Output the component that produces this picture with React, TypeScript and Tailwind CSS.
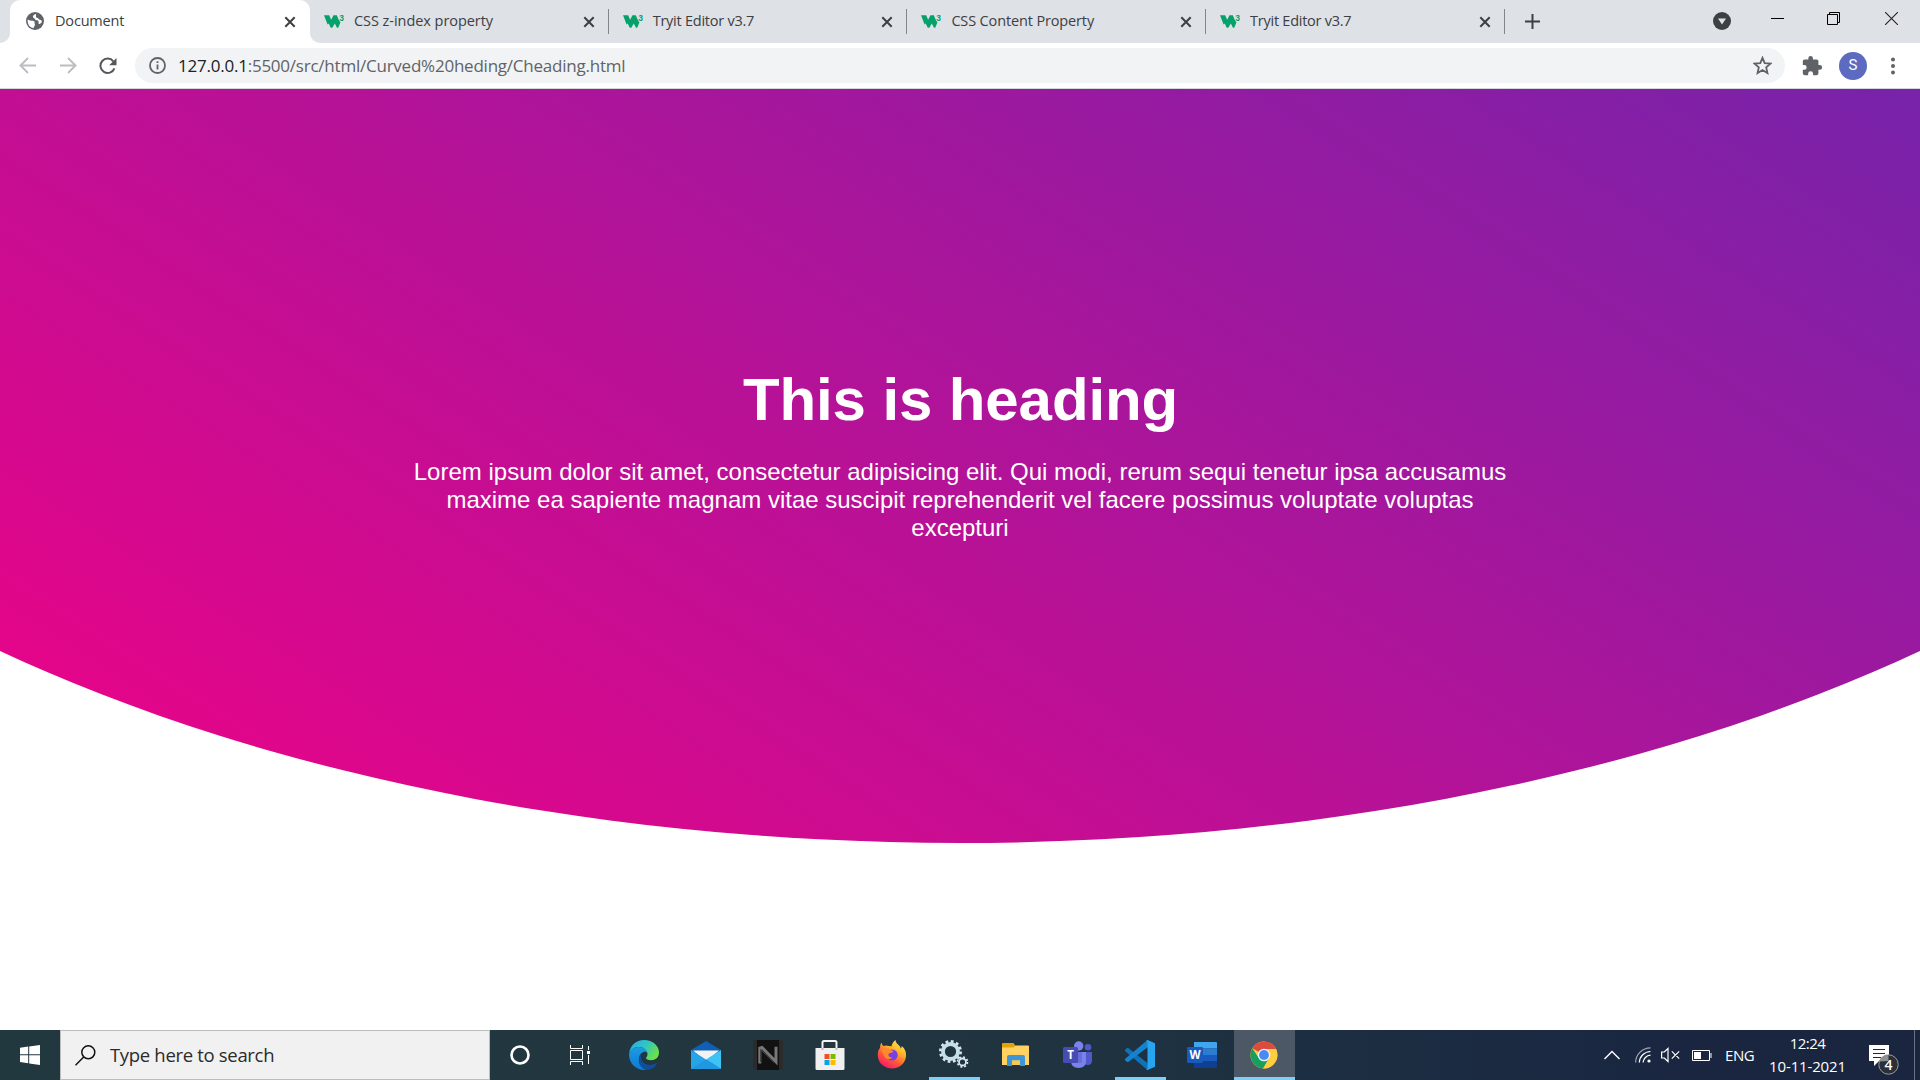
import type { ReactNode } from "react";

const ui = "font-['Open_Sans','Noto_Sans',sans-serif]";

function GlobeIcon() {
  return (
    <svg width="18" height="18" viewBox="0 0 18 18">
      <circle cx="9" cy="9" r="9" fill="#5f6368" />
      <path d="M1.6 7.6c2.2 1 3.4 1.300 5 1.100 1.300-.1 2.200.6 2 1.900-.2 1 .5 1.500.300 2.500-.2 1.200-1 2-1.500 3.200C3.800 15.600 1.400 12.500 1.600 7.600z" fill="#fff" />
      <path d="M9.600 2.100c-1.600.6-2.800 1.500-2.600 2.900.2 1.100 1.500 1 1.900 1.900.4 1 .9 1.600 2.100 1.400 1.400-.2 1.800 1.100 1.500 2.300-.2 1 .3 1.500 1.200 1.300 1-.3 1.900-1.100 2.200-2.400-.3-1-.8-1.600-1.900-1.700-1.500-.1-1.100-1.500-2.300-1.900-1-.3-1.900-.5-1.700-1.700.1-.8.400-1.300-.4-2.100z" fill="#fff" />
    </svg>
  );
}

function SchoolIcon() {
  return (
    <svg width="20" height="18" viewBox="0 0 20 18">
      <path d="M0 3.200H5.200L7.100 7.800 9.500 3.200H12.800L14.600 7.400 16.400 10.500 14.200 15.800 13 15.800 10.800 11.500 8.300 15.800H6.800L4.700 11.400 3.600 12.600z" fill="#04a16b" />
      <text x="15.300" y="8.500" fontSize="8.500" fontWeight="700" fontFamily="Liberation Sans, sans-serif" fill="#04a16b">3</text>
    </svg>
  );
}

function CloseIcon() {
  return (
    <svg width="12" height="12" viewBox="0 0 12 12" stroke="#3c4043" strokeWidth="2">
      <path d="M1.300 1.300l9.400 9.400M10.700 1.300L1.300 10.700" />
    </svg>
  );
}

function Tab({ title, tracking }: { title: string; tracking: string }) {
  return (
    <div className="flex h-[43px] w-[298.7px] shrink-0 items-center pb-[1px] pl-[14px]">
      <SchoolIcon />
      <span className={`ml-[10px] whitespace-nowrap text-[14.500px] leading-5 text-[#3c4043] ${tracking}`}>{title}</span>
      <span className="ml-auto mr-[13px] pt-[2px]"><CloseIcon /></span>
      <span className="mt-[1px] h-[25px] w-px bg-[#80868b]" />
    </div>
  );
}

function Chrome() {
  return (
    <header className={`flex h-[89px] w-full flex-col bg-white ${ui}`}>
      <div className="flex h-[43px] bg-[#dee1e6]">
        <div className="flex h-full w-[10px] bg-white">
          <div className="h-full w-full rounded-br-[10px] bg-[#dee1e6]" />
        </div>
        <div className="flex h-full w-[300px] shrink-0 items-center bg-[#dee1e6]">
          <div className="flex h-full w-full items-center rounded-t-[10px] bg-white pb-[1px] pl-4">
            <GlobeIcon />
            <span className="ml-[11px] text-[14.500px] leading-5 tracking-[-0.180px] text-[#3c4043]">Document</span>
            <span className="ml-auto mr-[14px] pt-[2px]"><CloseIcon /></span>
          </div>
        </div>
        <div className="flex flex-1 bg-white">
          <div className="flex flex-1 rounded-bl-[10px] bg-[#dee1e6]">
            <Tab title="CSS z-index property" tracking="tracking-[-0.050px]" />
            <Tab title="Tryit Editor v3.7" tracking="tracking-[-0.250px]" />
            <Tab title="CSS Content Property" tracking="tracking-[-0.140px]" />
            <Tab title="Tryit Editor v3.7" tracking="tracking-[-0.250px]" />
            <svg className="mt-[14px] ml-[20px]" width="15" height="15" viewBox="0 0 15 15" stroke="#3c4043" strokeWidth="2">
              <path d="M7.500 0v15M0 7.500h15" />
            </svg>
            <svg className="mt-[12px] ml-auto mr-[40px]" width="18" height="18" viewBox="0 0 18 18">
              <circle cx="9" cy="9" r="9" fill="#3c4043" />
              <path d="M5 6.500h8L9 12.500z" fill="#dee1e6" />
            </svg>
            <svg className="mt-[12px] mr-[43px]" width="13" height="13" viewBox="0 0 13 13"><path d="M0 6.500h13" stroke="#000" /></svg>
            <svg className="mt-[12px] mr-[44px]" width="14" height="14" viewBox="0 0 14 14" fill="none" stroke="#000">
              <path d="M.5 2.500h10v10H.5zM2.500 2.500v-2h10v10h-2" />
            </svg>
            <svg className="mt-[12px] mr-[22px]" width="13" height="13" viewBox="0 0 13 13" stroke="#222" strokeWidth="1.100"><path d="M0 0l13 13M13 0L0 13" /></svg>
          </div>
        </div>
      </div>
      <div className="flex h-[45px] items-center">
        <svg className="ml-[19px]" width="17" height="17" viewBox="0 0 17 17" fill="none" stroke="#bbbdc0" strokeWidth="1.900"><path d="M17 8.500H1.500M9 1L1.500 8.500 9 16" /></svg>
        <svg className="ml-[24px]" width="17" height="17" viewBox="0 0 17 17" fill="none" stroke="#bbbdc0" strokeWidth="1.900"><path d="M0 8.500h15.500M8 1l7.500 7.500L8 16" /></svg>
        <svg className="ml-[22px]" width="18" height="18" viewBox="0 0 18 18">
          <path d="M15.400 11.300A7.200 7.200 0 1 1 14.300 4.300" fill="none" stroke="#54585d" strokeWidth="2" />
          <path d="M17.500 1v7.300h-7.300z" fill="#54585d" />
        </svg>
        <div className="ml-[18px] flex h-[35px] w-[1650px] items-center rounded-full bg-[#f1f3f4] px-[13px]">
          <svg className="ml-px" width="17" height="17" viewBox="0 0 17 17" fill="none" stroke="#5f6368">
            <circle cx="8.500" cy="8.500" r="7.500" strokeWidth="1.800" />
            <path d="M8.500 7.500v5M8.500 4.200v1.900" strokeWidth="1.800" />
          </svg>
          <span className="ml-[12px] whitespace-nowrap text-[17px] leading-6 tracking-[-0.230px] text-[#5f6368]">
            <span className="text-[#202124]">127.0.0.1</span>:5500/src/html/Curved%20heding/Cheading.html
          </span>
          <svg className="ml-auto" width="19" height="19" viewBox="0 0 18 18" fill="none" stroke="#5f6368" strokeWidth="1.700">
            <path d="M9 1.700l2.100 5 5.500.5-4.100 3.600 1.200 5.400L9 13.300l-4.700 2.900 1.200-5.400-4.100-3.600 5.500-.5z" />
          </svg>
        </div>
        <svg className="ml-[16px]" width="22" height="22" viewBox="0 0 24 24" fill="#5f6368">
          <path d="M20.500 11H19V7c0-1.100-.9-2-2-2h-4V3.500a2.500 2.500 0 0 0-5 0V5H4c-1.100 0-2 .9-2 2v3.800h1.500a2.700 2.700 0 0 1 0 5.400H2V20c0 1.100.9 2 2 2h3.800v-1.500a2.700 2.700 0 0 1 5.400 0V22H17c1.100 0 2-.9 2-2v-4h1.500a2.500 2.500 0 0 0 0-5z" />
        </svg>
        <div className="ml-[16px] flex size-7 items-center justify-center rounded-full bg-[#5c6bc0] font-[Roboto,sans-serif] text-[15px] text-white">S</div>
        <svg className="ml-[23.500px]" width="4" height="18" viewBox="0 0 4 18" fill="#5f6368"><circle cx="2" cy="2.500" r="2" /><circle cx="2" cy="9" r="2" /><circle cx="2" cy="15.500" r="2" /></svg>
      </div>
      <div className="h-px bg-[#d5d7da]" />
    </header>
  );
}

function Hero() {
  return (
    <main className="h-[941px] bg-white">
      <section className="flex h-[754px] flex-col items-center bg-[linear-gradient(213deg,#7723aa,#ef0286)] pt-[277px] text-center font-['Liberation_Sans',Arial,sans-serif] text-white [clip-path:ellipse(75%_100%_at_50%_0%)]">
        <h1 className="pl-px text-[60px] leading-[68px] font-bold tracking-[-0.100px]">This is heading</h1>
        <p className="mt-[24px] w-[1120px] text-[24px] leading-[28px]">
          Lorem ipsum dolor sit amet, consectetur adipisicing elit. Qui modi, rerum sequi tenetur ipsa accusamus maxime ea sapiente magnam vitae suscipit reprehenderit vel facere possimus voluptate voluptas excepturi
        </p>
      </section>
    </main>
  );
}

function EdgeIcon() {
  return (
    <svg width="30" height="30" viewBox="0 0 30 30">
      <defs>
        <linearGradient id="edgeTop" x1="0" y1="0" x2="1" y2=".5"><stop offset="0" stopColor="#2aa9ea" /><stop offset=".55" stopColor="#2fc5c4" /><stop offset="1" stopColor="#6ae04a" /></linearGradient>
        <linearGradient id="edgeSide" x1="0" y1="0" x2="0" y2="1"><stop offset="0" stopColor="#1b9de2" /><stop offset="1" stopColor="#0f78d4" /></linearGradient>
      </defs>
      <path d="M0 14C1 5.500 7 0 15 0c9 0 15 6 15 12.500 0 5-3.500 7.700-7.800 7.700-3.500 0-5.200-1.200-5.200-2.200 0-.8 1.500-1.500 1.500-4C18.500 10.500 14.500 7 9.500 7 5 7 1.500 10 0 14z" fill="url(#edgeTop)" />
      <path d="M0 14.500C1 10 4.800 7 9.500 7c5 0 8.600 3 9 6.200-1.200-1.400-2.700-1.700-4-1.200-3 1-5.200 4.500-4.500 9 .5 4 3.500 7.500 7.500 8.800C8 31.200 0 24 0 14.500z" fill="url(#edgeSide)" />
      <path d="M12.600 13.300c-1.800 4.700.2 11.400 8.400 11.700 2.600 0 4.700-1 6.200-1.700.5-.2.900.2.600.7C26 27 22 30 17.500 29.800 12.500 28.500 10 24.500 10 20.500c0-3 1-5.500 2.600-7.200z" fill="#0d4f9c" />
    </svg>
  );
}

function MailIcon() {
  return (
    <svg width="30" height="30" viewBox="0 0 30 30">
      <path d="M0 10L15 1l15 9v3H0z" fill="#0f5fb4" />
      <path d="M2 10.500h26L17 20h-4z" fill="#f3f3f3" />
      <path d="M0 10l15 9.500L30 29H0z" fill="#27a4e8" />
      <path d="M30 10v19L15 19.500z" fill="#3dc4f5" />
      <path d="M0 29L15 19.500 30 29z" fill="#1f97e2" />
    </svg>
  );
}

function NIcon() {
  return (
    <svg width="30" height="30" viewBox="0 0 30 30">
      <rect width="30" height="30" rx="3" fill="#2b2b2b" />
      <rect x="4" width="22" height="30" fill="#111" />
      <path d="M6.800 23.500V8.200L9 7.500l14 14.300V6.800" fill="none" stroke="#777" strokeWidth="3" />
      <path d="M7.500 22V9.500L21 22.500" fill="none" stroke="#444" strokeWidth="1" />
    </svg>
  );
}

function StoreIcon() {
  return (
    <svg width="30" height="30" viewBox="0 0 30 30">
      <path d="M7.500 10V2.500q0-1.500 1.500-1.500h11q1.500 0 1.500 1.500V10" fill="none" stroke="#f4f4f4" strokeWidth="2" />
      <path d="M.5 8h29v20.500q0 1.500-1.500 1.500H2Q.5 30 .5 28.500z" fill="#f0f0f0" />
      <path d="M6.500 8h2v2h-2zM20.500 8h2v2h-2z" fill="#bbb" />
      <path d="M9.500 14h5v5h-5z" fill="#f25022" /><path d="M15.500 14h5v5h-5z" fill="#7fba00" />
      <path d="M9.500 20h5v5h-5z" fill="#00a4ef" /><path d="M15.500 20h5v5h-5z" fill="#ffb900" />
    </svg>
  );
}

function FirefoxIcon() {
  return (
    <svg width="30" height="30" viewBox="0 0 30 30">
      <defs>
        <linearGradient id="fox" x1=".85" y1="0" x2=".25" y2="1"><stop offset="0" stopColor="#fff04a" /><stop offset=".35" stopColor="#ffb52b" /><stop offset=".65" stopColor="#ff5a36" /><stop offset="1" stopColor="#f5156c" /></linearGradient>
      </defs>
      <path d="M4.500 2.500c.3 1.500 1 2.800 2 3.600C8.500 5.300 10 5.300 11.500 6 12.500 6 13.500 6 14.500 6.500 14.500 4 16.500 1.500 18.500 0c0 2.500 2 4 4 6 .8.800 1 1.500 1.200 2.500.8-.8 1-1.500 1-2.500C28 8.500 29.300 12 29 16c-.6 7.500-6.500 12.500-14 12.500S1 23 .8 15.500C.7 11 2 9 3 8 3 6 3.500 4 4.500 2.500z" fill="url(#fox)" />
      <circle cx="15.200" cy="15" r="5.500" fill="#7a3fe0" />
      <path d="M4 9.500c2.500-1.500 5-1.500 7-.8 1.500.8 3 1.800 5.500 2-.3 1.500-1.800 1.800-3.500 2.200-1 .3-1.600 1-1.600 1.900 0 1.700 1.600 2.900 3.700 2.700-2 2.500-6.500 1.800-8-1.500C6 13 5 11 4 9.500z" fill="#ff8a2a" />
    </svg>
  );
}

function GearsIcon() {
  return (
    <svg width="30" height="30" viewBox="0 0 30 30" fill="none">
      <circle cx="11.500" cy="11.500" r="7.500" stroke="#c5dfe9" strokeWidth="3.800" />
      <circle cx="11.500" cy="11.500" r="10.200" stroke="#d7e6ee" strokeWidth="2.600" strokeDasharray="2.800 2.541" />
      <circle cx="23.500" cy="22" r="3.500" stroke="#dbe7f2" strokeWidth="1.800" />
      <circle cx="23.500" cy="22" r="5" stroke="#dbe7f2" strokeWidth="1.600" strokeDasharray="2 1.927" />
    </svg>
  );
}

function FolderIcon() {
  return (
    <svg width="30" height="30" viewBox="0 0 30 30">
      <path d="M1 4q0-1 1-1h10.500l2 3H28v6H1z" fill="#e2a20c" />
      <path d="M1 7.500h11.500l2-2H27q1 0 1 1V25H1z" fill="#ffd262" />
      <path d="M6 26V17q0-2 2-2h14q2 0 2 2v9h-5v-5.500h-8V26z" fill="#3c96d8" />
      <path d="M11 20.500h8V25h-8z" fill="#f5c84e" />
    </svg>
  );
}

function TeamsIcon() {
  return (
    <svg width="30" height="30" viewBox="0 0 30 30">
      <circle cx="15.700" cy="6" r="4.700" fill="#7b83eb" /><circle cx="25" cy="7.300" r="3.300" fill="#5059c9" />
      <path d="M20 12h9v8.500q0 4.500-4.500 4.500-3 0-4.500-2z" fill="#5059c9" />
      <path d="M8 12h15v9q0 7-7.500 7T8 21z" fill="#7b83eb" />
      <path d="M8 12h11v11H8z" fill="#5b62cf" opacity=".6" />
      <rect y="7" width="15" height="16" rx="1.500" fill="#454db5" />
      <text x="7.500" y="19" textAnchor="middle" fontSize="11.500" fontWeight="700" fontFamily="Open Sans, sans-serif" fill="#fff">T</text>
    </svg>
  );
}

function CodeIcon() {
  return (
    <svg width="30" height="30" viewBox="0 0 30 30">
      <path d="M0 9.800l2-1.700q.6-.4 1.300 0L23 23.500v6.300q-1 0-1.700-.7L.2 11.300Q-.4 10.500 0 9.800z" fill="#0f72b8" />
      <path d="M0 20.200l2 1.700q.6.4 1.300 0L23 7V.200q-1 0-1.700.7L.2 18.700q-.6.800-.2 1.500z" fill="#1482cc" />
      <path d="M22.500 0L30 3.200v23.600L22.500 30q-1 0-1.500-.8 1.500.4 1.500-1.200V2q0-1.600-1.500-1.200.5-.8 1.500-.8z" fill="#26a5f0" />
    </svg>
  );
}

function WordIcon() {
  return (
    <svg width="30" height="30" viewBox="0 0 30 30">
      <path d="M7 2h22q1 0 1 1v5.500H7z" fill="#41a5ee" /><path d="M7 8.500h23V15H7z" fill="#2b7cd3" />
      <path d="M7 15h23v6.500H7z" fill="#185abd" /><path d="M7 21.500h23V27q0 1-1 1H7z" fill="#103f91" />
      <rect y="7" width="16" height="16" rx="1.300" fill="#185abd" />
      <text x="8" y="19" textAnchor="middle" fontSize="11.500" fontWeight="700" fontFamily="Open Sans, sans-serif" fill="#fff">W</text>
    </svg>
  );
}

function ChromeIcon() {
  return (
    <svg width="28" height="28" viewBox="0 0 28 28">
      <circle cx="14" cy="14" r="13.500" fill="#ffcd40" />
      <path d="M14 14L2.300 7.250A13.500 13.500 0 0 1 25.700 7.250L25.900 8H14z" fill="#dd4b3e" />
      <path d="M2.300 7.250A13.500 13.500 0 0 0 13 27.460L19.200 17 8.800 17z" fill="#17a05d" />
      <path d="M14 8h11.900A13.500 13.500 0 0 1 13.300 27.500L19.500 16.500z" fill="#ffcd40" />
      <circle cx="14" cy="14" r="6.300" fill="#f3f3f3" /><circle cx="14" cy="14" r="4.900" fill="#4a8af4" />
    </svg>
  );
}

function TaskbarApp({ children, open = false }: { children: ReactNode; open?: boolean }) {
  return (
    <div className="flex h-[50px] w-[62px] shrink-0 flex-col items-center pt-[10px]">
      {children}
      {open && <div className="mt-auto h-[3px] w-[51px] bg-[#80cdf8]" />}
    </div>
  );
}

function Taskbar() {
  return (
    <footer className={`flex h-[50px] w-full bg-[linear-gradient(90deg,#22383f_0%,#21363f_45%,#1d3041_65%,#1a2741_85%,#1a2540_100%)] text-white ${ui}`}>
      <div className="flex w-[60px] items-center justify-center">
        <svg width="20" height="20" viewBox="0 0 20 20" fill="#fff"><path d="M0 2.800L8.200 1.600v7.700H0zM9.200 1.500L20 0v9.300H9.200zM0 10.200h8.200v8L0 17zM9.200 10.200H20V20L9.200 18.400z" /></svg>
      </div>
      <div className="flex w-[430px] items-center border border-[#bcbcbc] bg-[#f1f1f1] pl-[14px]">
        <svg width="21" height="21" viewBox="0 0 21 21" fill="none" stroke="#111" strokeWidth="1.500"><circle cx="13.300" cy="7.300" r="6.500" /><path d="M8.700 12L.5 20.300" /></svg>
        <span className="ml-[14px] text-[18.500px] leading-6 tracking-[-0.320px] text-[#2b2b2b]">Type here to search</span>
      </div>
      <div className="flex w-[60px] items-center justify-center">
        <svg width="20" height="20" viewBox="0 0 20 20"><circle cx="10" cy="10" r="8.500" fill="none" stroke="#fff" strokeWidth="2.600" /></svg>
      </div>
      <div className="mr-[3px] flex w-[60px] items-center justify-center">
        <svg width="20" height="20" viewBox="0 0 20 20" fill="none" stroke="#fff"><path d="M.5 0v3.500h12V0M.5 5.500h12v9H.5zM.5 20v-3.500h12V20M18.500 1v4M18.500 10v9" /><path d="M17 6h3v3h-3z" fill="#fff" stroke="none" /></svg>
      </div>
      <TaskbarApp><EdgeIcon /></TaskbarApp>
      <TaskbarApp><MailIcon /></TaskbarApp>
      <TaskbarApp><NIcon /></TaskbarApp>
      <TaskbarApp><StoreIcon /></TaskbarApp>
      <TaskbarApp><FirefoxIcon /></TaskbarApp>
      <TaskbarApp open><GearsIcon /></TaskbarApp>
      <TaskbarApp><FolderIcon /></TaskbarApp>
      <TaskbarApp><TeamsIcon /></TaskbarApp>
      <TaskbarApp open><CodeIcon /></TaskbarApp>
      <TaskbarApp><WordIcon /></TaskbarApp>
      <div className="ml-px flex h-[50px] w-[61px] shrink-0 flex-col items-center bg-[#4c5865] pt-[11px] pr-px">
        <ChromeIcon />
        <div className="mt-auto -mr-px h-[3px] w-[61px] bg-[#80cdf8]" />
      </div>
      <div className="ml-auto flex items-center">
        <svg width="16" height="10" viewBox="0 0 16 10" fill="none" stroke="#fff" strokeWidth="1.400"><path d="M.5 9L8 1.500 15.500 9" /></svg>
        <svg className="ml-[15px]" width="16" height="16" viewBox="0 0 16 16" fill="none" stroke="#fff" strokeWidth="1.200">
          <path d="M.6 15.500A15 15 0 0 1 15.500.8" opacity=".6" /><path d="M4.300 15.500A11.500 11.500 0 0 1 15.500 4.500" /><path d="M8 15.500A8 8 0 0 1 15.500 8.200" /><circle cx="14" cy="14" r="1.600" fill="#fff" stroke="none" />
        </svg>
        <svg className="ml-[10px]" width="19" height="16" viewBox="0 0 19 16" fill="none" stroke="#fff" strokeWidth="1.200"><path d="M.6 5h2.700L7 1.500v13L3.300 11H.6zM10.800 4.300l7.400 7.400M18.200 4.300l-7.400 7.400" /></svg>
        <svg className="ml-[12px]" width="20" height="11" viewBox="0 0 20 11" fill="none" stroke="#fff"><path d="M.5.5h17v10H.5zM19 3v5" /><path d="M2 2h7v7H2z" fill="#fff" stroke="none" /></svg>
        <span className="ml-[13px] w-[28px] whitespace-nowrap text-[15px] leading-5 tracking-[-0.400px]">ENG</span>
        <div className="ml-[17px] flex w-[75px] flex-col items-center pb-[1px] text-[15px] leading-[23px] whitespace-nowrap">
          <span className="tracking-[-0.500px]">12:24</span>
          <span className="tracking-[-0.150px]">10-11-2021</span>
        </div>
        <svg className="mt-[7px] ml-[24px]" width="31" height="32" viewBox="0 0 31 32">
          <path d="M0 2h20v16H10l-5 5v-5H0z" fill="#fff" />
          <path d="M4 6.500h12M4 10.500h12M4 14.500h8" stroke="#1a2741" strokeWidth="1.200" />
          <circle cx="19.500" cy="21.500" r="9.700" fill="#2c2f35" stroke="#999b9e" />
          <path d="M10.300 18.500A9.700 9.700 0 0 1 19.500 12v6z" fill="#8f9194" />
          <text x="19.500" y="26.500" textAnchor="middle" fontSize="14" fontWeight="600" fontFamily="Open Sans, sans-serif" fill="#fff">4</text>
        </svg>
        <div className="ml-[14px] mr-[5px] h-[50px] w-px bg-[#6a7282]" />
      </div>
    </footer>
  );
}

export default function App() {
  return (
    <div className="flex h-[1080px] w-[1920px] flex-col overflow-hidden bg-white">
      <Chrome />
      <Hero />
      <Taskbar />
    </div>
  );
}
